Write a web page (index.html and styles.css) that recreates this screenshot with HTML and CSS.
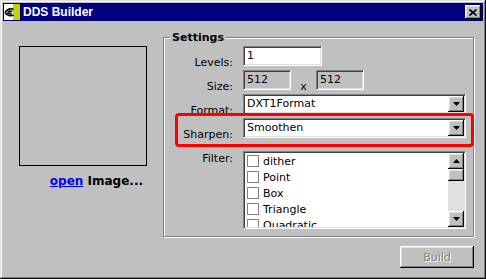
FILE: index.html
```html
<!DOCTYPE html>
<html>
<head>
<meta charset="utf-8">
<link rel="stylesheet" href="styles.css">
</head>
<body>
<div class="window">
  <div class="titlebar">
    <svg class="app-icon" width="16" height="16" viewBox="0 0 16 16">
      <rect x="0" y="0" width="16" height="16" fill="#c4d300"/>
      <rect x="0" y="0" width="9" height="16" fill="#ffffff"/>
      <path d="M1 8.5 C3 5 7 4 9.5 5.5 M1 8.5 C3 11.5 7 12.5 9.5 11" stroke="#000" stroke-width="1.6" fill="none"/>
      <path d="M3.5 8.5 C4.5 6.8 7 6.5 8.5 7.5 M3.5 8.5 C4.5 10 6.5 10.3 8 9.8" stroke="#000" stroke-width="1.4" fill="none"/>
      <circle cx="6.3" cy="8.6" r="1" fill="#000"/>
    </svg>
    <span class="title">DDS Builder</span>
    <span class="close-btn">
      <svg width="8" height="7" viewBox="0 0 8 7"><path d="M0.5 0.5 L7.5 6.5 M7.5 0.5 L0.5 6.5" stroke="#000" stroke-width="1.6"/></svg>
    </span>
  </div>

  <div class="main">
    <div class="preview-panel">
      <div class="preview"></div>
      <div class="open-line"><a class="open-link">open</a> Image...</div>
    </div>

    <fieldset class="settings">
      <legend>Settings</legend>

      <div class="row">
        <span class="lbl">Levels:</span>
        <div class="sunken textbox wide">1</div>
      </div>

      <div class="row">
        <span class="lbl">Size:</span>
        <div class="sunken textbox small disabled">512</div>
        <span class="times">x</span>
        <div class="sunken textbox small disabled">512</div>
      </div>

      <div class="row">
        <span class="lbl">Format:</span>
        <div class="sunken combo">
          <span class="combo-text">DXT1Format</span>
          <span class="raised arrow-btn"><svg width="7" height="4" viewBox="0 0 7 4"><polygon points="0,0 7,0 3.5,4" fill="#000"/></svg></span>
        </div>
      </div>

      <div class="row highlighted">
        <span class="lbl">Sharpen:</span>
        <div class="sunken combo">
          <span class="combo-text">Smoothen</span>
          <span class="raised arrow-btn"><svg width="7" height="4" viewBox="0 0 7 4"><polygon points="0,0 7,0 3.5,4" fill="#000"/></svg></span>
        </div>
        <div class="highlight"></div>
      </div>

      <div class="row filter-row">
        <span class="lbl">Filter:</span>
        <div class="sunken listbox">
          <ul class="items">
            <li><span class="check"></span>dither</li>
            <li><span class="check"></span>Point</li>
            <li><span class="check"></span>Box</li>
            <li><span class="check"></span>Triangle</li>
            <li><span class="check"></span>Quadratic</li>
          </ul>
          <div class="scrollbar">
            <span class="raised arrow-btn"><svg width="7" height="4" viewBox="0 0 7 4"><polygon points="0,4 7,4 3.5,0" fill="#000"/></svg></span>
            <span class="raised thumb"></span>
            <span class="track"></span>
            <span class="raised arrow-btn"><svg width="7" height="4" viewBox="0 0 7 4"><polygon points="0,0 7,0 3.5,4" fill="#000"/></svg></span>
          </div>
        </div>
      </div>
    </fieldset>
  </div>

  <div class="footer">
    <span class="raised build-btn">Build</span>
  </div>
</div>
</body>
</html>
```

FILE: styles.css
```css
html, body {
  margin: 0;
  padding: 0;
  background: #c0c0c0;
}

body {
  font-family: "DejaVu Sans", Verdana, sans-serif;
  font-size: 11px;
  color: #000;
}

.window {
  width: 486px;
  height: 279px;
  box-sizing: border-box;
  padding: 3px;
  background: #c0c0c0;
  box-shadow: inset -1px -1px #0a0a0a, inset 1px 1px #dfdfdf, inset -2px -2px #808080, inset 2px 2px #fff;
  display: flex;
  flex-direction: column;
}

.titlebar {
  height: 18px;
  background: #000080;
  display: flex;
  align-items: center;
}

.app-icon {
  margin-left: 1px;
  flex: none;
}

.title {
  margin-left: 3px;
  color: #fff;
  font-family: "Liberation Sans", Arial, sans-serif;
  font-weight: bold;
  font-size: 12px;
  line-height: 14px;
}

.raised {
  background: #c0c0c0;
  box-shadow: inset -1px -1px #0a0a0a, inset 1px 1px #fff, inset -2px -2px #808080, inset 2px 2px #dfdfdf;
}

.close-btn {
  margin-left: auto;
  margin-right: 2px;
  width: 16px;
  height: 14px;
  background: #c0c0c0;
  box-shadow: inset -1px -1px #0a0a0a, inset 1px 1px #fff, inset -2px -2px #808080, inset 2px 2px #dfdfdf;
  display: flex;
  align-items: center;
  justify-content: center;
}

.close-btn svg {
  margin-left: -1px;
}

.main {
  display: flex;
  padding: 10px 9px 0 0;
}

.preview-panel {
  width: 160px;
  flex: none;
  display: flex;
  flex-direction: column;
  padding-left: 16px;
  box-sizing: border-box;
}

.preview {
  margin-top: 15px;
  width: 128px;
  height: 120px;
  box-sizing: border-box;
  border: 1px solid #000;
}

.open-line {
  margin-top: 8px;
  width: 128px;
  box-sizing: border-box;
  padding-right: 4px;
  text-align: right;
  font-weight: bold;
  font-size: 12px;
  line-height: 15px;
}

.open-link {
  color: #0000ff;
  text-decoration: underline;
}

.settings {
  flex: 1;
  margin: 0;
  min-width: 0;
  padding: 2px 7px 7px 2px;
  border: 1px solid #808080;
  box-shadow: inset 1px 1px #fff, 1px 1px #fff;
}

.settings legend {
  margin-left: 4px;
  padding: 0 2px;
  background: #c0c0c0;
  font-weight: bold;
  font-size: 11px;
  line-height: 13px;
}

.row {
  display: flex;
  align-items: flex-end;
  margin-top: 4px;
  position: relative;
}

.row:first-of-type {
  margin-top: 0;
}

.lbl {
  width: 67px;
  margin-right: 10px;
  text-align: right;
  flex: none;
  line-height: 13px;
  margin-bottom: -3px;
}

.sunken {
  box-sizing: border-box;
  border: 1px solid;
  border-color: #808080 #fff #fff #808080;
  box-shadow: inset 1px 1px #404040, inset -1px -1px #dfdfdf;
  background: #fff;
}

.textbox {
  height: 20px;
  padding: 1px 3px;
  line-height: 16px;
}

.textbox.wide {
  width: 79px;
}

.textbox.small {
  width: 48px;
}

.textbox.disabled {
  background: #c0c0c0;
}

.times {
  width: 25px;
  text-align: center;
  line-height: 13px;
  margin-bottom: -3px;
}

.combo {
  flex: 1;
  height: 20px;
  padding: 1px;
  display: flex;
  align-items: center;
}

.combo-text {
  flex: 1;
  padding-left: 2px;
  line-height: 16px;
}

.arrow-btn {
  width: 16px;
  height: 16px;
  display: flex;
  align-items: center;
  justify-content: center;
  flex: none;
}

.highlight {
  position: absolute;
  left: 9px;
  right: -8px;
  top: -5px;
  bottom: -9px;
  border: 3px solid #ff0000;
  border-radius: 4px;
}

.filter-row {
  align-items: flex-start;
  margin-top: 13px;
}

.filter-row .lbl {
  margin-top: 1px;
  margin-bottom: 0;
}

.listbox {
  flex: 1;
  height: 78px;
  padding: 1px;
  display: flex;
}

.items {
  list-style: none;
  margin: 0;
  padding: 0 0 0 2px;
  flex: 1;
  overflow: hidden;
}

.items li {
  height: 16px;
  display: flex;
  align-items: center;
  line-height: 13px;
}

.check {
  width: 12px;
  height: 12px;
  box-sizing: border-box;
  border: 1px solid #808080;
  background: #fff;
  margin-right: 4px;
  flex: none;
}

.scrollbar {
  width: 16px;
  display: flex;
  flex-direction: column;
  background: #e0e0e0;
}

.thumb {
  height: 12px;
}

.track {
  flex: 1;
}

.footer {
  display: flex;
  justify-content: flex-end;
  padding: 9px 9px 0 0;
}

.build-btn {
  width: 74px;
  height: 22px;
  display: flex;
  align-items: center;
  justify-content: center;
  color: #808080;
  text-shadow: 1px 1px #fff;
}
```
